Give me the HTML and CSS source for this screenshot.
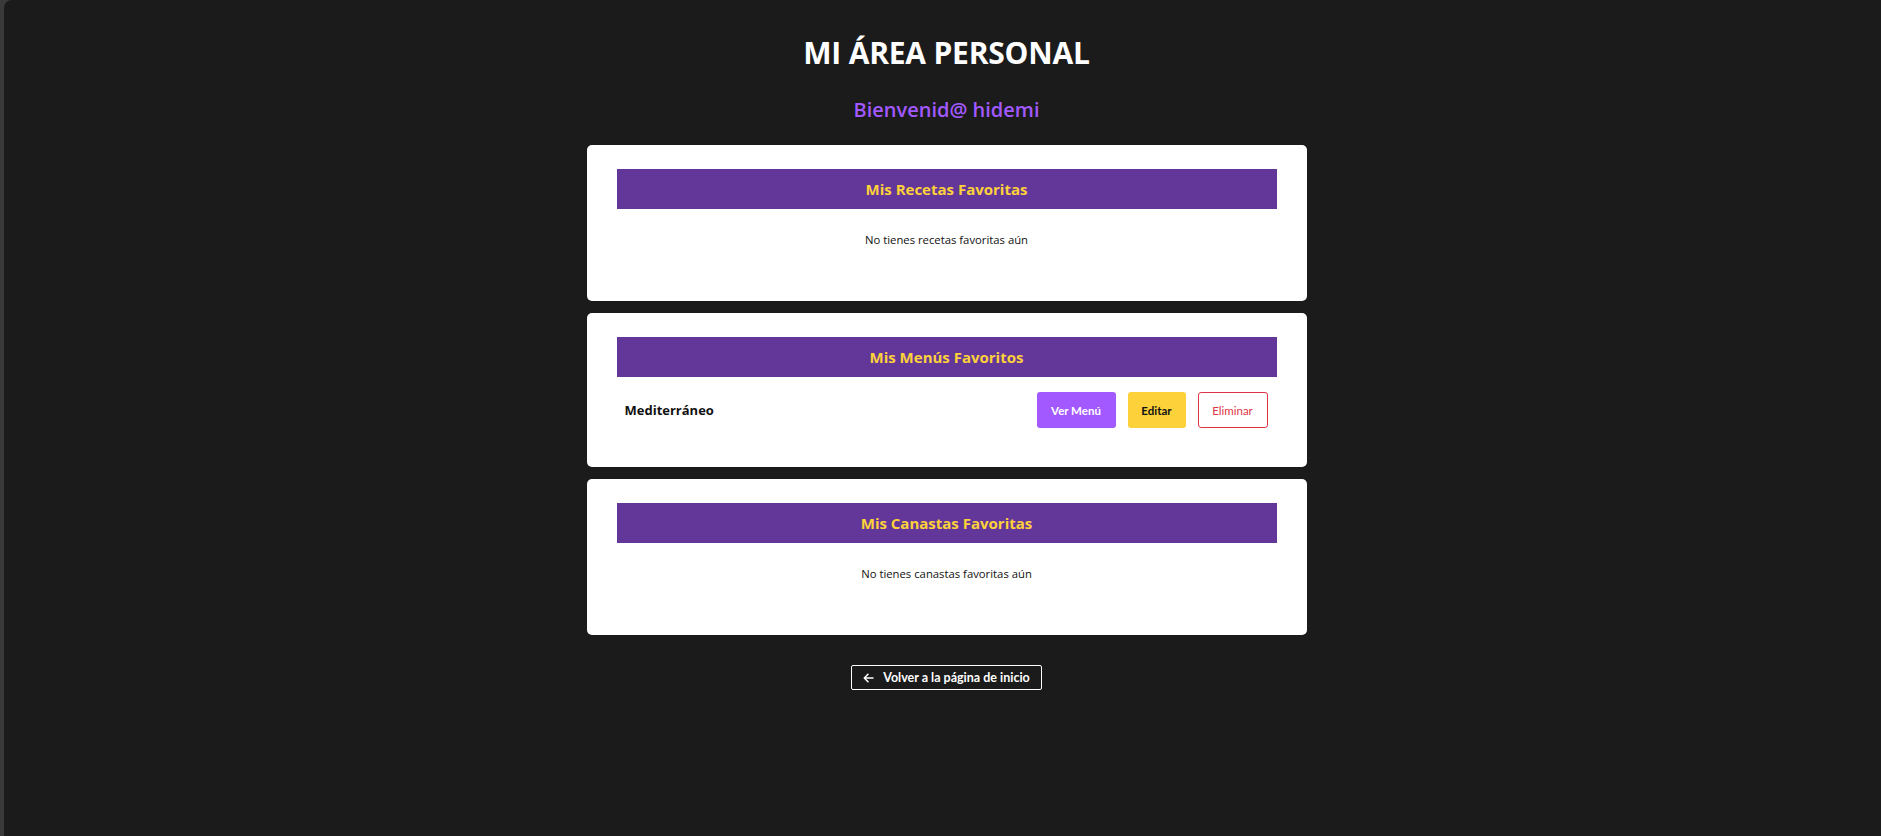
FILE: index.html
```html
<!DOCTYPE html>
<html lang="es">
<head>
<meta charset="utf-8">
<title>Mi Área Personal</title>
<link rel="stylesheet" href="styles.css">
</head>
<body>
<div class="frame">
  <div class="edge"></div>
  <main class="panel">
    <h1 class="title">MI ÁREA PERSONAL</h1>
    <h2 class="welcome">Bienvenid@ hidemi</h2>

    <section class="card">
      <h3 class="card-head">Mis Recetas Favoritas</h3>
      <p class="empty">No tienes recetas favoritas aún</p>
    </section>

    <section class="card">
      <h3 class="card-head">Mis Menús Favoritos</h3>
      <ul class="fav-list">
        <li class="fav-item">
          <span class="fav-name">Mediterráneo</span>
          <div class="actions">
            <button class="btn btn-view">Ver Menú</button>
            <button class="btn btn-edit">Editar</button>
            <button class="btn btn-delete">Eliminar</button>
          </div>
        </li>
      </ul>
    </section>

    <section class="card">
      <h3 class="card-head">Mis Canastas Favoritas</h3>
      <p class="empty">No tienes canastas favoritas aún</p>
    </section>

    <a class="back" href="#">
      <svg class="back-icon" width="11" height="10" viewBox="0 0 11 10" fill="none" stroke="#fff" stroke-width="1.6" stroke-linecap="round" stroke-linejoin="round"><path d="M10 5H1.5M5 1.3L1.3 5L5 8.7"/></svg>
      <span>Volver a la página de inicio</span>
    </a>
  </main>
</div>
</body>
</html>
```

FILE: styles.css
```css
html, body {
  margin: 0;
  padding: 0;
  height: 100%;
}

body {
  background: #3a3a3a;
  font-family: "Open Sans", "Noto Sans", sans-serif;
  overflow: hidden;
}

.frame {
  display: flex;
  height: 836px;
}

.edge {
  width: 4px;
  background: #3a3a3a;
  flex: none;
}

.panel {
  flex: 1;
  background: #1b1b1b;
  border-top-left-radius: 8px;
  padding: 0 0 0 8px;
  display: flex;
  flex-direction: column;
  align-items: center;
}

.title {
  margin: 33px 0 0;
  font-size: 30px;
  line-height: 40px;
  font-weight: 700;
  color: #ffffff;
  letter-spacing: -0.2px;
}

.welcome {
  margin: 23px 0 0;
  font-size: 20px;
  line-height: 28px;
  font-weight: 600;
  color: #a259ff;
}

.card {
  width: 660px;
  background: #ffffff;
  border-radius: 5px;
  padding: 24px 30px;
  margin-top: 12px;
}

.card:first-of-type {
  margin-top: 21px;
}

.card-head {
  margin: 0;
  height: 40px;
  background: #633799;
  color: #fdd13a;
  font-size: 15px;
  font-weight: 700;
  display: flex;
  align-items: center;
  justify-content: center;
}

.empty {
  margin: 23px 0 29px;
  text-align: center;
  font-size: 11.3px;
  line-height: 16px;
  color: #111;
}

.fav-list {
  list-style: none;
  margin: 7px 0 0;
  padding: 0;
}

.fav-item {
  display: flex;
  align-items: center;
  justify-content: space-between;
  padding: 8px 9px 8px 8px;
  margin-bottom: 7px;
}

.fav-name {
  font-size: 13px;
  font-weight: 700;
  color: #111;
}

.actions {
  display: flex;
  gap: 12px;
}

.btn {
  font-family: Lato, "Open Sans", sans-serif;
  font-size: 11.5px;
  font-weight: 700;
  height: 36px;
  border-radius: 3px;
  border: 1px solid transparent;
  cursor: pointer;
}

.btn-view {
  width: 79px;
  background: #a259ff;
  color: #ffffff;
}

.btn-edit {
  width: 58px;
  background: #fdd13a;
  color: #111;
}

.btn-delete {
  width: 70px;
  background: #ffffff;
  border-color: #dc3545;
  color: #dc3545;
  font-weight: 400;
}

.back {
  margin-top: 30px;
  height: 25px;
  box-sizing: border-box;
  width: 191px;
  border: 1px solid #ffffff;
  border-radius: 2px;
  display: flex;
  align-items: center;
  justify-content: center;
  gap: 9px;
  color: #ffffff;
  text-decoration: none;
  font-family: Lato, "Open Sans", sans-serif;
  font-size: 12.5px;
  font-weight: 700;
}

.back-icon {
  flex: none;
}
```
